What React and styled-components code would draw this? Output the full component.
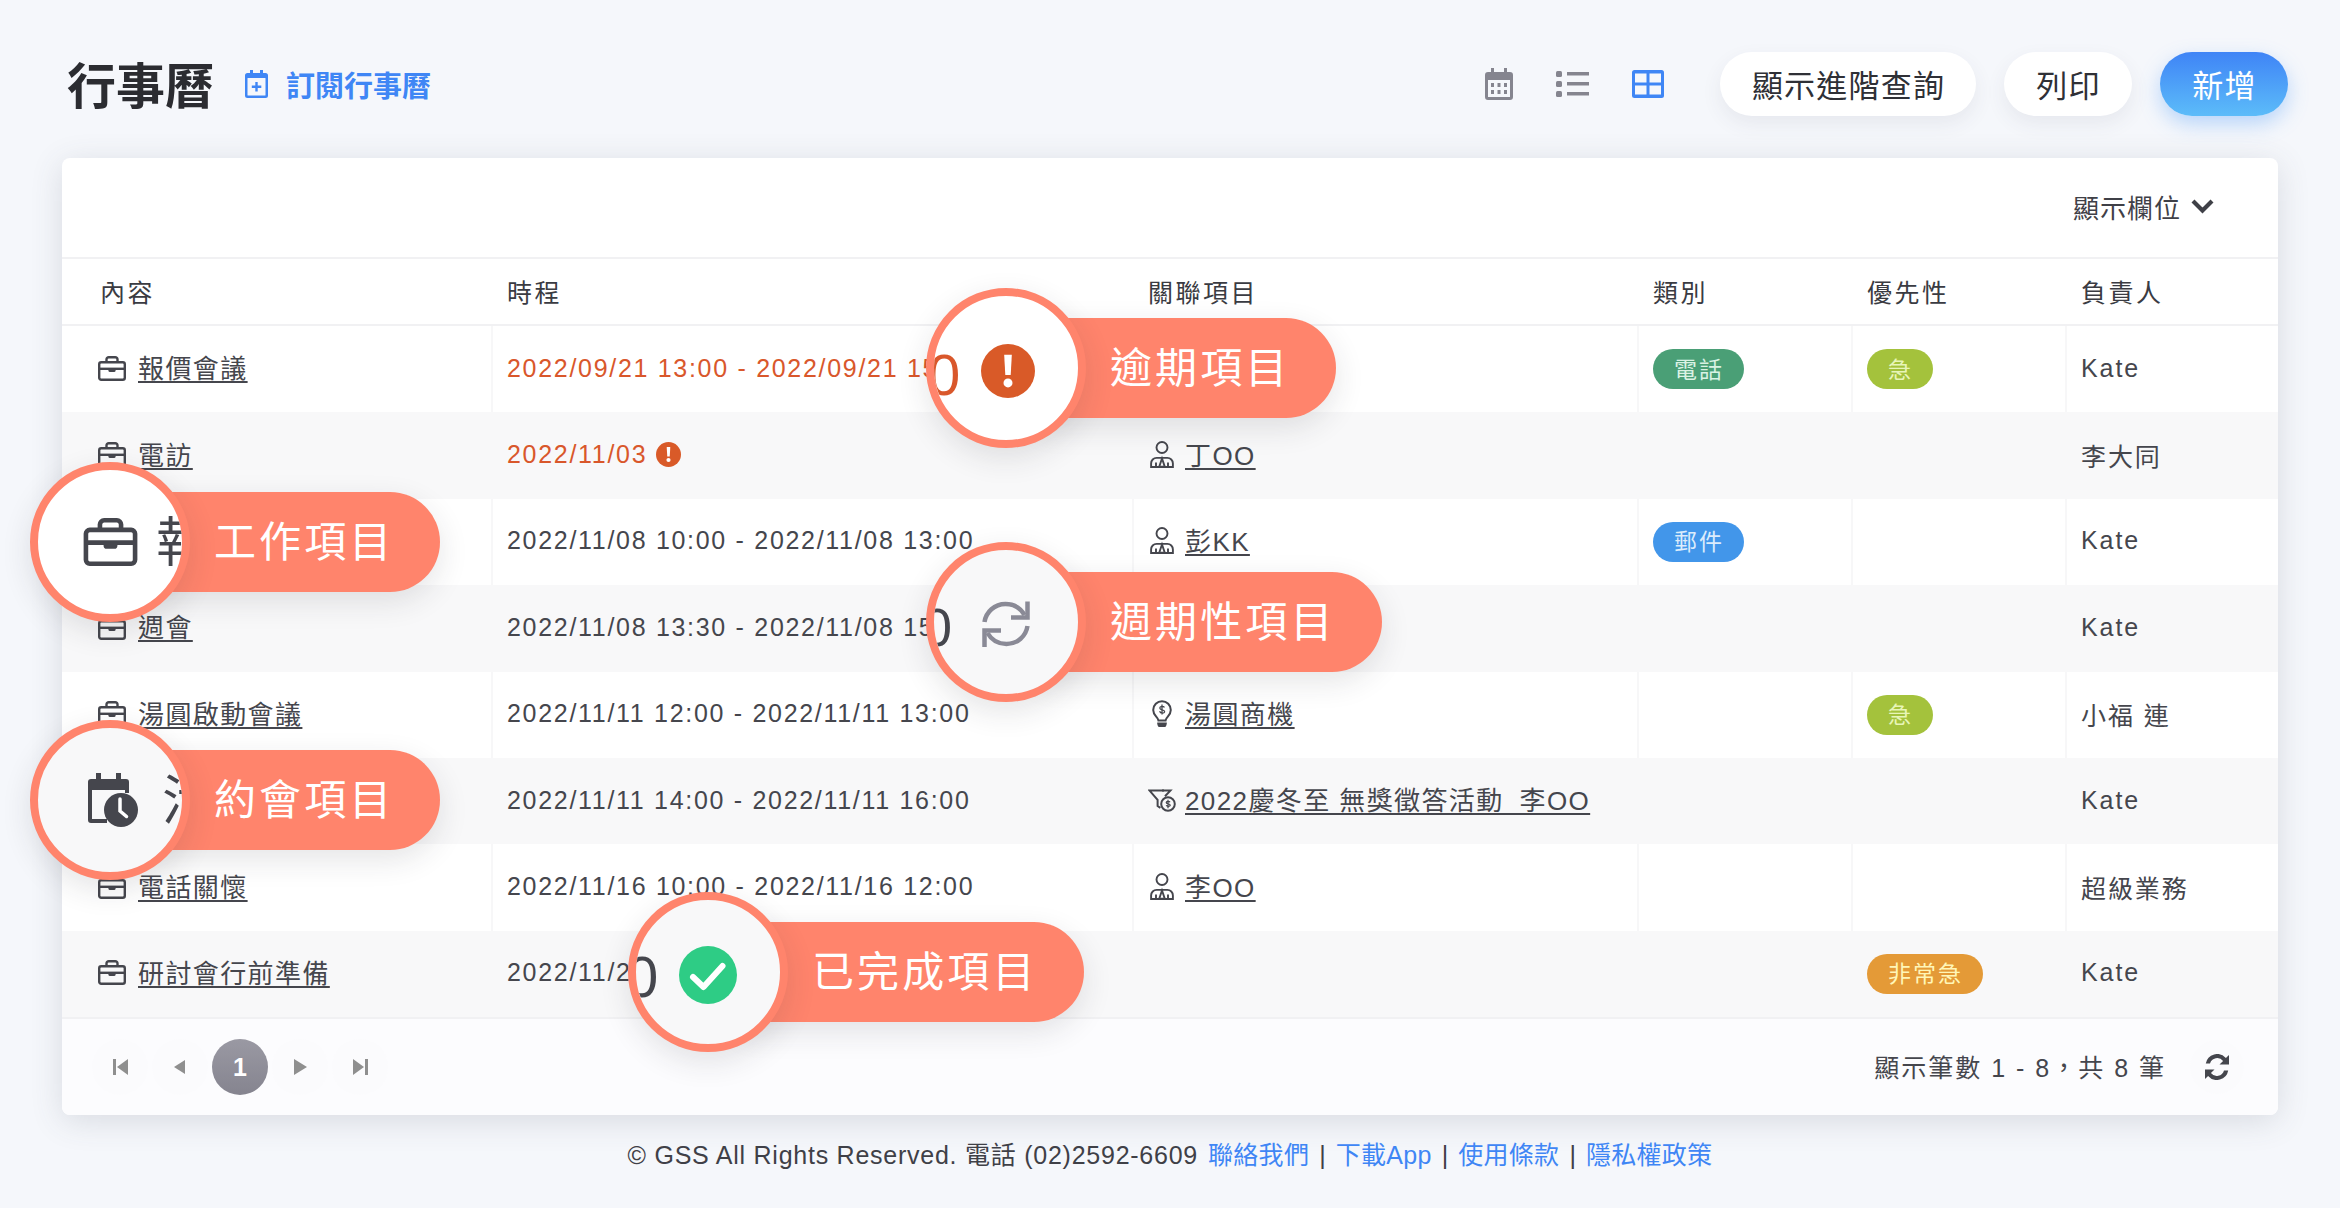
import React from "react";
import styled, { createGlobalStyle } from "styled-components";

const GlobalStyle = createGlobalStyle`
  html, body {
    margin: 0;
    padding: 0;
    background: #f5f7fb;
  }
  body {
    font-family: "Liberation Sans", "Noto Sans CJK TC", sans-serif;
    color: #45464d;
  }
  * {
    box-sizing: border-box;
  }
`;

const Page = styled.div`
  position: relative;
  width: 2340px;
  height: 1208px;
  overflow: hidden;
`;

const Header = styled.header`
  display: flex;
  align-items: center;
  height: 158px;
  padding: 10px 52px 0 67px;
`;

const Title = styled.h1`
  margin: 0 31px 3px 0;
  font-size: 49px;
  font-weight: 700;
  color: #2b2c31;
`;

const Subscribe = styled.a`
  display: flex;
  align-items: center;
  gap: 18px;
  font-size: 29px;
  font-weight: 700;
  color: #3f86f5;
`;

const HeaderRight = styled.div`
  display: flex;
  align-items: center;
  margin-left: auto;
`;

const ViewSwitch = styled.div`
  display: flex;
  align-items: center;
  gap: 43px;
  margin-right: 56px;
`;

const Pill = styled.button`
  height: 64px;
  margin-left: ${(props) => (props.$first ? "0" : "28px")};
  padding: 0 0 2px 1px;
  width: ${(props) => props.$width}px;
  border: none;
  border-radius: 32px;
  font-family: inherit;
  font-size: 31px;
  letter-spacing: 1.2px;
  color: ${(props) => (props.$primary ? "#ffffff" : "#2f3036")};
  background: ${(props) =>
    props.$primary ? "linear-gradient(180deg, #3f84f6, #5cbcf9)" : "#ffffff"};
  box-shadow: ${(props) =>
    props.$primary
      ? "0 8px 20px rgba(70, 150, 250, 0.35)"
      : "0 8px 20px rgba(60, 70, 90, 0.08)"};
`;

const Card = styled.section`
  width: 2216px;
  height: 957px;
  margin-left: 62px;
  border-radius: 8px;
  overflow: hidden;
  background: #ffffff;
  box-shadow: 0 6px 32px rgba(70, 75, 95, 0.16);
`;

const CardToolbar = styled.div`
  display: flex;
  align-items: center;
  justify-content: flex-end;
  gap: 10px;
  height: 101px;
  padding: 0 64px 2px 0;
  border-bottom: 2px solid #f1f1f3;
  font-size: 26px;
  letter-spacing: 1px;
  color: #3f4047;
`;

const Columns = styled.div`
  display: grid;
  grid-template-columns: 429px 641px 505px 214px 214px 1fr;
`;

const HeadRow = styled(Columns)`
  height: 67px;
  padding-bottom: 2px;
  border-bottom: 2px solid #f1f1f3;
`;

const HeadCell = styled.div`
  display: flex;
  align-items: center;
  padding-left: ${(props) => (props.$first ? "38px" : "16px")};
  font-size: 25px;
  letter-spacing: 2.5px;
  color: #3a3b42;
`;

const Row = styled(Columns)`
  height: 86.4px;
  background: ${(props) => (props.$even ? "#f8f8f9" : "#ffffff")};
`;

const Cell = styled.div`
  display: flex;
  align-items: center;
  gap: 9px;
  padding: 0 0 2px ${(props) => (props.$first ? "36px" : "14px")};
  border-left: ${(props) => (props.$first ? "none" : "2px solid #f7f7f8")};
  border-left-color: ${(props) => (props.$even ? "transparent" : "#f7f7f8")};
  font-size: 25px;
  letter-spacing: 1.9px;
  white-space: nowrap;
  color: ${(props) => (props.$late ? "#d9572b" : "#45464d")};
`;

const DateText = styled.span`
  letter-spacing: 1.7px;
`;

const ItemLink = styled.a`
  margin: 0 0 3px ${(props) => (props.$wide ? "3px" : "0")};
  font-size: 26px;
  letter-spacing: 1.4px;
  color: #45464d;
  text-decoration: underline;
  text-decoration-thickness: 2px;
  text-underline-offset: 3px;
`;

const IconSlot = styled.span`
  display: flex;
  justify-content: center;
  flex: 0 0 28px;
  color: #45464d;
`;

const Tag = styled.span`
  display: inline-flex;
  align-items: center;
  justify-content: center;
  height: 40px;
  margin-top: 2px;
  padding: 0 20px 3px 21px;
  border-radius: 20px;
  font-size: 23px;
  letter-spacing: 2px;
  color: ${(props) => props.$text};
  background: ${(props) => props.$bg};
`;

const CardFooter = styled.div`
  display: flex;
  align-items: center;
  height: 98px;
  padding: 0 34px 0 30px;
  border-top: 2px solid #f1f1f3;
  background: #fcfcfe;
`;

const Pager = styled.div`
  display: flex;
  align-items: center;
  gap: 4px;
`;

const PageButton = styled.span`
  display: flex;
  align-items: center;
  justify-content: center;
  width: 56px;
  height: 56px;
  border-radius: 50%;
  font-size: 25px;
  font-weight: 700;
  color: #ffffff;
  background: ${(props) =>
    props.$active ? "linear-gradient(180deg, #9a99a3, #85848f)" : "#fbfbfd"};
`;

const Count = styled.div`
  margin-left: auto;
  padding-bottom: 2px;
  font-size: 25px;
  letter-spacing: 2px;
  color: #45464d;
`;

const RefreshButton = styled.span`
  display: flex;
  align-items: center;
  justify-content: center;
  width: 54px;
  height: 54px;
  margin-left: 24px;
  border-radius: 50%;
  color: #45464d;
  background: #fbfbfd;
`;

const Copyright = styled.footer`
  display: flex;
  align-items: baseline;
  justify-content: center;
  gap: 10px;
  margin-top: 20px;
  font-size: 25px;
  color: #3f4047;
  white-space: pre;
`;

const CopyText = styled.span`
  letter-spacing: 0.75px;
`;

const BlueLink = styled.a`
  letter-spacing: 0.3px;
  color: #3f86f5;
`;

const Callout = styled.div`
  position: absolute;
  left: ${(props) => props.$left}px;
  top: ${(props) => props.$top}px;
  display: flex;
  align-items: center;
  height: 160px;
`;

const Lens = styled.div`
  position: relative;
  z-index: 1;
  display: flex;
  align-items: center;
  justify-content: center;
  flex: 0 0 160px;
  height: 160px;
  padding: ${(props) => props.$pad || "0"};
  border: 8px solid #ff846c;
  border-radius: 50%;
  overflow: hidden;
  background: ${(props) => props.$bg};
  box-shadow: 0 10px 30px rgba(40, 40, 50, 0.12);
`;

const Magnified = styled.span`
  position: absolute;
  left: ${(props) => props.$left}px;
  top: ${(props) => props.$top}px;
  font-size: ${(props) => props.$size}px;
  line-height: 1;
  color: ${(props) => props.$color};
`;

const CalloutLabel = styled.div`
  display: flex;
  align-items: center;
  height: 100px;
  margin-left: -48px;
  padding: 0 46px 7px 72px;
  border-radius: 0 50px 50px 0;
  font-size: 42px;
  letter-spacing: 3.1px;
  color: #ffffff;
  background: #ff846c;
  box-shadow: 0 10px 30px rgba(40, 40, 50, 0.12);
`;

const Briefcase = ({ width = 28, height = 25 }) => (
  <svg width={width} height={height} viewBox="0 0 28 25" fill="none" stroke="currentColor" strokeWidth="2.4">
    <rect x="1.2" y="6.2" width="25.6" height="17.6" rx="2" />
    <path d="M8.5 6V3.4a2.2 2.2 0 0 1 2.2-2.2h6.6a2.2 2.2 0 0 1 2.2 2.2V6" />
    <path d="M1.2 12.8h25.6" />
    <path d="M10.4 12.8h7.2v1.6a1.6 1.6 0 0 1-1.6 1.6h-4a1.6 1.6 0 0 1-1.6-1.6z" fill="currentColor" stroke="none" />
  </svg>
);

const PersonIcon = () => (
  <svg width="24" height="27" viewBox="0 0 24 27" fill="none" stroke="currentColor" strokeWidth="1.9">
    <circle cx="12" cy="6.5" r="5.5" />
    <path d="M1.1 26v-3.600a5.500 5.500 0 0 1 5.500-5.500h10.800a5.500 5.500 0 0 1 5.500 5.500V26z" />
    <path d="M12 17.500l-2.800 8.200h5.600z" />
    <path d="M6 21.500V26M18 21.500V26" />
  </svg>
);

const BulbIcon = () => (
  <svg width="20" height="27" viewBox="0 0 20 27" fill="none" stroke="currentColor" strokeWidth="2">
    <path d="M6.400 20.400C5.800 17 1.200 15.400 1.200 10a8.800 8.800 0 0 1 17.600 0c0 5.400-4.600 7-5.200 10.400z" />
    <path d="M6.200 23.600h7.600a3.800 3.800 0 0 1-7.600 0z" fill="currentColor" />
    <path d="M12.400 7.400c-.6-1.400-4.600-1.600-4.600.6 0 2.400 4.800 1.200 4.800 3.600 0 2.200-4.200 2-5-.4M10 4.600v9.800" strokeWidth="1.300" />
  </svg>
);

const FunnelIcon = () => (
  <svg width="28" height="23" viewBox="0 0 28 23" fill="none" stroke="currentColor" strokeWidth="2">
    <path d="M16 1.600H1.600l8 9.200V17l2.800 1.800" />
    <path d="M14 1.600h8.400l-5.400 5.600" />
    <circle cx="20" cy="15" r="6.800" />
    <path d="M22 13.200c-.4-1-3.800-1.200-3.800.4 0 1.800 4 .8 4 2.600 0 1.600-3.400 1.400-4 0M20 10.800v8.400" strokeWidth="1.200" />
  </svg>
);

const AlertDot = ({ size, color = "#d95a28" }) => (
  <svg width={size} height={size} viewBox="0 0 24 24">
    <circle cx="12" cy="12" r="12" fill={color} />
    <path d="M10.300 4.800h3.400l-.5 9h-2.400z" fill="#ffffff" />
    <circle cx="12" cy="17.300" r="2" fill="#ffffff" />
  </svg>
);

const CheckDot = () => (
  <svg width="58" height="58" viewBox="0 0 58 58">
    <circle cx="29" cy="29" r="29" fill="#2ecc85" />
    <path d="M14 31l10.500 10L43.500 20" fill="none" stroke="#ffffff" strokeWidth="6" strokeLinecap="round" strokeLinejoin="round" />
  </svg>
);

const RepeatIcon = () => (
  <svg width="48" height="46" viewBox="0 0 48 46" fill="none" stroke="#8a8a96" strokeWidth="4.500">
    <path d="M2.500 21C4 11 12.500 3 23.500 3c8 0 15 4 19 11" />
    <path d="M45.500 0.500V16.500H29" />
    <path d="M45.500 25C44 35 35.500 43 24.500 43c-8 0-15-4-19-11" />
    <path d="M2.500 46V29.500H19" />
  </svg>
);

const CalendarClock = () => (
  <svg width="52" height="54" viewBox="0 0 52 54">
    <path d="M9 0h5v6h15V0h5v6h5a3 3 0 0 1 3 3v11h-4v-3H5v29h15v4H4a3 3 0 0 1-3-3V9a3 3 0 0 1 3-3h5z" fill="#45464d" />
    <circle cx="34" cy="37" r="17" fill="#45464d" />
    <path d="M33 26v12l6.500 5.500" fill="none" stroke="#ffffff" strokeWidth="3.500" strokeLinecap="round" />
  </svg>
);

const CalendarPlus = () => (
  <svg width="23" height="28" viewBox="0 0 23 28" fill="none">
    <path d="M5 0h3v3h7V0h3v3h2.500A2.500 2.500 0 0 1 23 5.500v20a2.500 2.500 0 0 1-2.500 2.500h-18A2.500 2.500 0 0 1 0 25.500v-20A2.500 2.500 0 0 1 2.500 3H5z" fill="#3f86f5" />
    <rect x="2.500" y="8" width="18" height="17.500" rx="0.500" fill="#f5f7fb" />
    <path d="M11.500 12v9.500M6.800 16.800h9.500" stroke="#3f86f5" strokeWidth="2.400" />
  </svg>
);

const CalendarView = () => (
  <svg width="28" height="32" viewBox="0 0 28 32">
    <path d="M6 0h3v4h10V0h3v4h3a3 3 0 0 1 3 3v22a3 3 0 0 1-3 3H3a3 3 0 0 1-3-3V7a3 3 0 0 1 3-3h3z" fill="#85858f" />
    <rect x="3" y="12" width="22" height="17" fill="#f5f7fb" />
    <g fill="#85858f">
      <rect x="6" y="15" width="3" height="4" />
      <rect x="12.500" y="15" width="3" height="4" />
      <rect x="19" y="15" width="3" height="4" />
      <rect x="6" y="22" width="3" height="4" />
      <rect x="12.500" y="22" width="3" height="4" />
      <rect x="19" y="22" width="3" height="4" />
    </g>
  </svg>
);

const ListView = () => (
  <svg width="33" height="26" viewBox="0 0 33 26" fill="#85858f">
    <rect x="0" y="0" width="6" height="6" rx="1.500" />
    <rect x="0" y="10" width="6" height="6" rx="1.500" />
    <rect x="0" y="20" width="6" height="6" rx="1.500" />
    <rect x="11" y="1" width="22" height="3.500" />
    <rect x="11" y="11" width="22" height="3.500" />
    <rect x="11" y="21" width="22" height="3.500" />
  </svg>
);

const GridView = () => (
  <svg width="32" height="28" viewBox="0 0 32 28">
    <rect width="32" height="28" rx="2.500" fill="#3f86f5" />
    <rect x="3" y="3.500" width="11.500" height="9" fill="#f5f7fb" />
    <rect x="17.500" y="3.500" width="11.500" height="9" fill="#f5f7fb" />
    <rect x="3" y="15.500" width="11.500" height="9" fill="#f5f7fb" />
    <rect x="17.500" y="15.500" width="11.500" height="9" fill="#f5f7fb" />
  </svg>
);

const Chevron = () => (
  <svg width="23" height="15" viewBox="0 0 23 15" fill="none" stroke="#3f4047" strokeWidth="4.200">
    <path d="M2 2l9.500 9.500L21 2" />
  </svg>
);

const PagerArrow = ({ dir }) => {
  const shapes = {
    first: <path d="M0 0h3v16H0zM15 0v16L4 8z" />,
    prev: <path d="M12 1v14L1 8z" />,
    next: <path d="M1 0v16l13-8z" />,
    last: <path d="M0 0v16l11-8zM12 0h3v16h-3z" />,
  };
  return (
    <svg width="15" height="16" viewBox="0 0 15 16" fill="#8f8f8f">
      {shapes[dir]}
    </svg>
  );
};

const SyncSolid = () => (
  <svg width="24" height="26" viewBox="0 0 24 26" fill="currentColor">
    <path d="M24 1v9.500h-9.500l3.600-3.600A7.500 7.500 0 0 0 5 9.500H.8A11.500 11.500 0 0 1 20.900 4.100z" />
    <path d="M0 25v-9.500h9.500l-3.600 3.600A7.500 7.500 0 0 0 19 16.500h4.200A11.500 11.500 0 0 1 3.100 21.900z" />
  </svg>
);

const rows = [
  {
    title: "報價會議",
    date: "2022/09/21 13:00 - 2022/09/21 15:00",
    late: true,
    type: "phone",
    priority: "urgent",
    owner: "Kate",
  },
  {
    title: "電訪",
    date: "2022/11/03",
    late: true,
    alert: true,
    icon: "person",
    item: "丁OO",
    owner: "李大同",
  },
  {
    date: "2022/11/08 10:00 - 2022/11/08 13:00",
    icon: "person",
    item: "彭KK",
    type: "mail",
    owner: "Kate",
  },
  {
    title: "週會",
    date: "2022/11/08 13:30 - 2022/11/08 15:00",
    owner: "Kate",
  },
  {
    title: "湯圓啟動會議",
    date: "2022/11/11 12:00 - 2022/11/11 13:00",
    icon: "bulb",
    item: "湯圓商機",
    priority: "urgent",
    owner: "小福 連",
  },
  {
    date: "2022/11/11 14:00 - 2022/11/11 16:00",
    icon: "funnel",
    item: "2022慶冬至 無獎徵答活動_李OO",
    owner: "Kate",
  },
  {
    title: "電話關懷",
    date: "2022/11/16 10:00 - 2022/11/16 12:00",
    icon: "person",
    item: "李OO",
    owner: "超級業務",
  },
  {
    title: "研討會行前準備",
    date: "2022/11/20",
    priority: "critical",
    owner: "Kate",
  },
];

const itemIcons = {
  person: <PersonIcon />,
  bulb: <BulbIcon />,
  funnel: <FunnelIcon />,
};

const typeTags = {
  phone: { label: "電話", bg: "#4a9f76", text: "#d9f2e4" },
  mail: { label: "郵件", bg: "#4296ea", text: "#dcecfc" },
};

const priorityTags = {
  urgent: { label: "急", bg: "#a4c23c", text: "#e8f5b8" },
  critical: { label: "非常急", bg: "#e49a37", text: "#fff6b8" },
};

const renderTag = (tag) =>
  tag && (
    <Tag $bg={tag.bg} $text={tag.text}>
      {tag.label}
    </Tag>
  );

const callouts = [
  {
    left: 926,
    top: 288,
    label: "逾期項目",
    bg: "#ffffff",
    pad: "5px 0 0 3px",
    glyph: { text: "0", left: -6, top: 50, size: 58, color: "#d9572b" },
    icon: <AlertDot size={54} />,
  },
  {
    left: 926,
    top: 542,
    label: "週期性項目",
    bg: "#f8f8f9",
    pad: "4px 0 0 0",
    glyph: { text: "0", left: -12, top: 50, size: 54, color: "#45464d" },
    icon: <RepeatIcon />,
  },
  {
    left: 30,
    top: 462,
    label: "工作項目",
    bg: "#ffffff",
    glyph: { text: "報", left: 118, top: 46, size: 54, color: "#45464d" },
    icon: <Briefcase width={55} height={48} />,
  },
  {
    left: 30,
    top: 720,
    label: "約會項目",
    bg: "#f8f8f9",
    pad: "0 0 0 6px",
    glyph: { text: "活", left: 124, top: 46, size: 54, color: "#45464d" },
    icon: <CalendarClock />,
  },
  {
    left: 628,
    top: 892,
    label: "已完成項目",
    bg: "#f8f8f9",
    pad: "6px 0 0 0",
    glyph: { text: "0", left: -10, top: 48, size: 58, color: "#45464d" },
    icon: <CheckDot />,
  },
];

export default function App() {
  return (
    <Page>
      <GlobalStyle />
      <Header>
        <Title>行事曆</Title>
        <Subscribe>
          <CalendarPlus />
          訂閱行事曆
        </Subscribe>
        <HeaderRight>
          <ViewSwitch>
            <CalendarView />
            <ListView />
            <GridView />
          </ViewSwitch>
          <Pill $first $width={256}>顯示進階查詢</Pill>
          <Pill $width={128}>列印</Pill>
          <Pill $primary $width={128}>新增</Pill>
        </HeaderRight>
      </Header>

      <Card>
        <CardToolbar>
          顯示欄位
          <Chevron />
        </CardToolbar>
        <HeadRow>
          <HeadCell $first>內容</HeadCell>
          <HeadCell>時程</HeadCell>
          <HeadCell>關聯項目</HeadCell>
          <HeadCell>類別</HeadCell>
          <HeadCell>優先性</HeadCell>
          <HeadCell>負責人</HeadCell>
        </HeadRow>
        {rows.map((row, index) => {
          const even = index % 2 === 1;
          return (
            <Row key={row.date} $even={even}>
              <Cell $first>
                {row.title && (
                  <>
                    <IconSlot>
                      <Briefcase />
                    </IconSlot>
                    <ItemLink $wide>{row.title}</ItemLink>
                  </>
                )}
              </Cell>
              <Cell $even={even} $late={row.late}>
                <DateText>{row.date}</DateText>
                {row.alert && <AlertDot size={25} />}
              </Cell>
              <Cell $even={even}>
                {row.item && (
                  <>
                    <IconSlot>{itemIcons[row.icon]}</IconSlot>
                    <ItemLink>{row.item}</ItemLink>
                  </>
                )}
              </Cell>
              <Cell $even={even}>{renderTag(typeTags[row.type])}</Cell>
              <Cell $even={even}>{renderTag(priorityTags[row.priority])}</Cell>
              <Cell $even={even}>{row.owner}</Cell>
            </Row>
          );
        })}
        <CardFooter>
          <Pager>
            <PageButton>
              <PagerArrow dir="first" />
            </PageButton>
            <PageButton>
              <PagerArrow dir="prev" />
            </PageButton>
            <PageButton $active>1</PageButton>
            <PageButton>
              <PagerArrow dir="next" />
            </PageButton>
            <PageButton>
              <PagerArrow dir="last" />
            </PageButton>
          </Pager>
          <Count>顯示筆數 1 - 8，共 8 筆</Count>
          <RefreshButton>
            <SyncSolid />
          </RefreshButton>
        </CardFooter>
      </Card>

      <Copyright>
        <CopyText>© GSS All Rights Reserved. 電話 (02)2592-6609</CopyText>
        <BlueLink>聯絡我們</BlueLink>
        <span>|</span>
        <BlueLink>下載App</BlueLink>
        <span>|</span>
        <BlueLink>使用條款</BlueLink>
        <span>|</span>
        <BlueLink>隱私權政策</BlueLink>
      </Copyright>

      {callouts.map((callout) => (
        <Callout key={callout.label} $left={callout.left} $top={callout.top}>
          <Lens $bg={callout.bg} $pad={callout.pad}>
            <Magnified
              $left={callout.glyph.left}
              $top={callout.glyph.top}
              $size={callout.glyph.size}
              $color={callout.glyph.color}
            >
              {callout.glyph.text}
            </Magnified>
            {callout.icon}
          </Lens>
          <CalloutLabel>{callout.label}</CalloutLabel>
        </Callout>
      ))}
    </Page>
  );
}
